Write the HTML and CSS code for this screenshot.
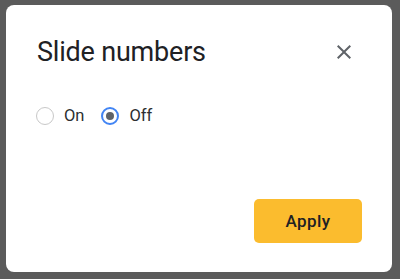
FILE: index.html
```html
<!DOCTYPE html>
<html>
<head>
<meta charset="utf-8">
<link rel="stylesheet" href="styles.css">
</head>
<body>
<div class="dialog">
  <div class="header">
    <h1 class="title">Slide numbers</h1>
    <button class="close" aria-label="Close">
      <svg viewBox="0 0 24 24" width="24" height="24"><path d="M19 6.41L17.59 5 12 10.59 6.41 5 5 6.41 10.59 12 5 17.59 6.41 19 12 13.41 17.59 19 19 17.59 13.41 12z" fill="#5f6368"/></svg>
    </button>
  </div>
  <div class="options">
    <label class="option"><span class="radio"></span><span class="label">On</span></label>
    <label class="option"><span class="radio checked"></span><span class="label">Off</span></label>
  </div>
  <div class="footer">
    <button class="apply">Apply</button>
  </div>
</div>
</body>
</html>
```
FILE: styles.css
```css
html, body {
  margin: 0;
  height: 100%;
}
body {
  background: #5b5b5b;
  padding: 5px 8px 7px 6px;
  box-sizing: border-box;
  font-family: Roboto, "Liberation Sans", sans-serif;
  color: #202124;
}
.dialog {
  background: #fff;
  border-radius: 8px;
  height: 100%;
  box-sizing: border-box;
  display: flex;
  flex-direction: column;
  padding: 31px 30px 29px 30px;
}
.header {
  display: flex;
  align-items: center;
  justify-content: space-between;
  height: 32px;
}
.title {
  margin: 0 0 0 1px;
  font-size: 27px;
  font-weight: 400;
  line-height: 32px;
  letter-spacing: -0.2px;
}
.close {
  border: 0;
  background: none;
  padding: 0;
  width: 24px;
  height: 24px;
  margin-right: 6px;
  display: flex;
}
.options {
  display: flex;
  align-items: center;
  gap: 17px;
  margin-top: 36px;
  height: 24px;
}
.option {
  display: flex;
  align-items: center;
  gap: 10px;
}
.radio {
  width: 18px;
  height: 18px;
  border: 1.5px solid #c8c8c8;
  border-radius: 50%;
  box-sizing: border-box;
  display: flex;
  align-items: center;
  justify-content: center;
}
.radio.checked {
  border: 2px solid #4285f4;
}
.radio.checked::after {
  content: "";
  width: 8px;
  height: 8px;
  border-radius: 50%;
  background: #5f6368;
}
.label {
  font-size: 16.5px;
  line-height: 24px;
  color: #2d2f31;
}
.footer {
  margin-top: auto;
  display: flex;
  justify-content: flex-end;
}
.apply {
  width: 108px;
  height: 44px;
  border: 0;
  border-radius: 5px;
  background: #fbbc2e;
  color: #202124;
  font-family: Roboto, "Liberation Sans", sans-serif;
  font-size: 17px;
  font-weight: 500;
  letter-spacing: 0.4px;
}
```
